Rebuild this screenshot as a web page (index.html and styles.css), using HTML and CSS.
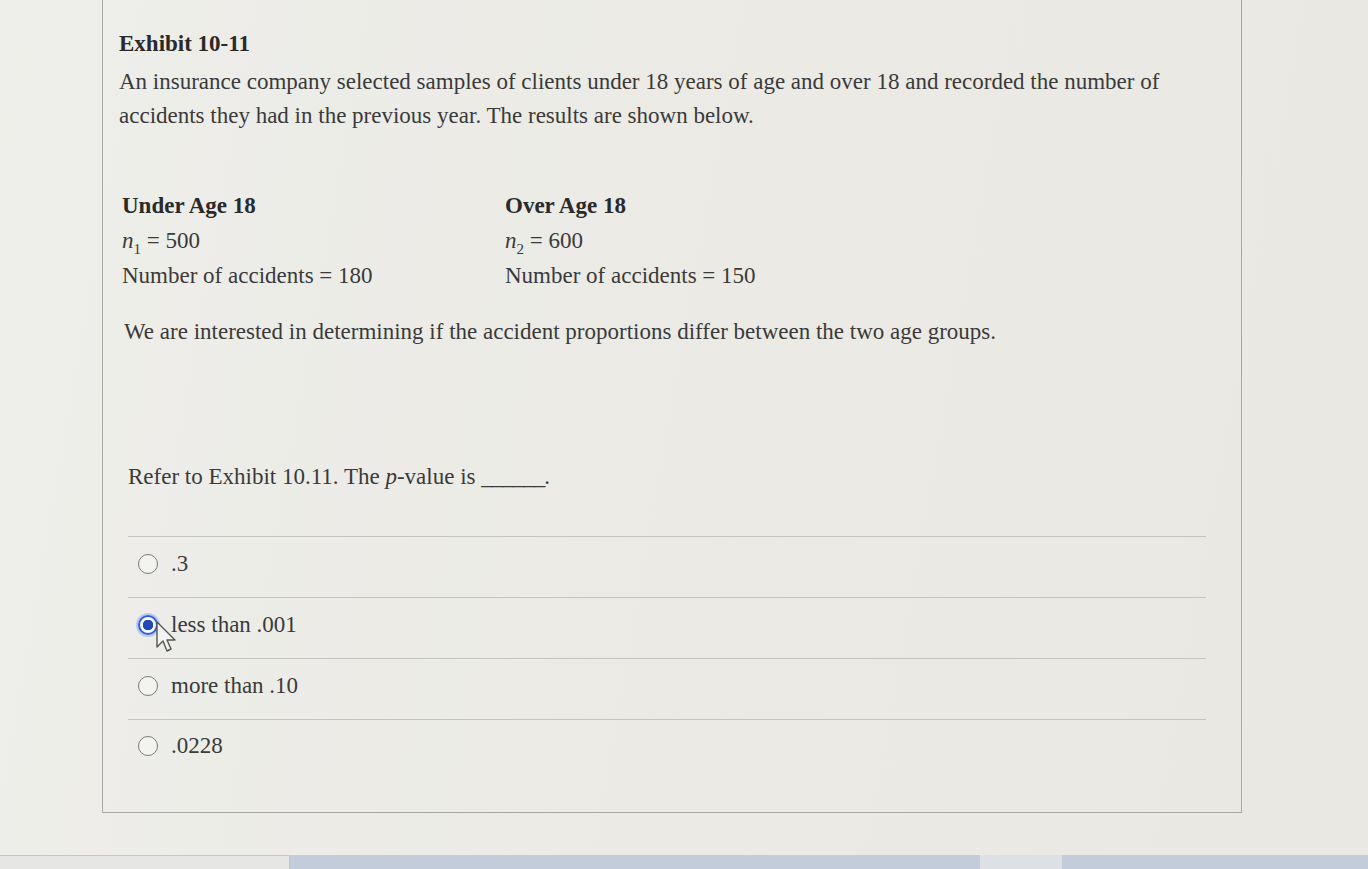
FILE: index.html
```html
<!DOCTYPE html>
<html>
<head>
<meta charset="utf-8">
<link rel="stylesheet" href="styles.css">
</head>
<body>
<div class="page">
  <div class="card">
    <div class="exhibit">
      <h1 class="title">Exhibit 10-11</h1>
      <p class="intro">An insurance company selected samples of clients under 18 years of age and over 18 and recorded the number of accidents they had in the previous year. The results are shown below.</p>
      <div class="groups">
        <div class="group">
          <div class="ghead">Under Age 18</div>
          <div class="gline"><i>n</i><sub>1</sub> = 500</div>
          <div class="gline">Number of accidents = 180</div>
        </div>
        <div class="group">
          <div class="ghead">Over Age 18</div>
          <div class="gline"><i>n</i><sub>2</sub> = 600</div>
          <div class="gline">Number of accidents = 150</div>
        </div>
      </div>
      <p class="interest">We are interested in determining if the accident proportions differ between the two age groups.</p>
    </div>
    <div class="question">
      <p class="prompt">Refer to Exhibit 10.11. The <i>p</i>-value is <span class="blank">______</span>.</p>
      <div class="options">
        <div class="option"><span class="radio"></span><span class="label">.3</span></div>
        <div class="option"><span class="radio checked"></span><span class="label">less than .001</span>
          <svg class="cursor" width="26" height="36" viewBox="0 0 26 36"><path d="M2 2 L2 27 L8 21 L12 31 L16 29 L12 20 L20 20 Z" fill="#f4f4f2" stroke="#555" stroke-width="1.4" stroke-linejoin="round"/></svg>
        </div>
        <div class="option"><span class="radio"></span><span class="label">more than .10</span></div>
        <div class="option"><span class="radio"></span><span class="label">.0228</span></div>
      </div>
    </div>
  </div>
  <div class="taskbar">
    <div class="seg seg-light"></div>
    <div class="seg seg-blue wide"></div>
    <div class="seg seg-pale"></div>
    <div class="seg seg-blue fill"></div>
  </div>
</div>
</body>
</html>
```

FILE: styles.css
```css
* { box-sizing: border-box; }
html, body {
  margin: 0;
  padding: 0;
  height: 869px;
  overflow: hidden;
}
body {
  background: linear-gradient(100deg, #eeeeea 0%, #ebeae5 50%, #e9e8e3 100%);
  font-family: "Liberation Serif", "Times New Roman", serif;
  color: #3a3a3a;
}
.page {
  height: 869px;
  display: flex;
  flex-direction: column;
}
.card {
  margin-left: 102px;
  width: 1140px;
  height: 813px;
  border: 1px solid #a8a8a4;
  border-top: none;
  padding: 32px 35px 0 16px;
}
.title {
  margin: 0;
  font-size: 23px;
  line-height: 24px;
  font-weight: bold;
  color: #2a2a2a;
}
.intro {
  margin: 9px 0 0 0;
  font-size: 23px;
  line-height: 34px;
}
.groups {
  display: flex;
  margin-top: 55px;
  padding-left: 3px;
}
.group {
  width: 383px;
  font-size: 23px;
  line-height: 35px;
}
.ghead {
  font-weight: bold;
  color: #2a2a2a;
}
.gline sub {
  font-size: 15px;
  line-height: 0;
}
.interest {
  margin: 21px 0 0 5px;
  font-size: 23px;
  line-height: 35px;
}
.question {
  margin-top: 110px;
  padding-left: 9px;
}
.prompt {
  margin: 0;
  font-size: 23px;
  line-height: 35px;
}
.blank {
  letter-spacing: -1px;
}
.options {
  margin-top: 42px;
}
.option {
  position: relative;
  display: flex;
  align-items: center;
  gap: 13px;
  border-top: 1px solid #c4c4c0;
  height: 61px;
  padding: 0 0 6px 10px;
  font-size: 23px;
}
.option:last-child {
  padding-bottom: 8px;
}
.radio {
  width: 20px;
  height: 20px;
  border-radius: 50%;
  border: 1.6px solid #7a7a78;
  background: #f3f3f0;
  flex: none;
}
.radio.checked {
  border: 2px solid #2c5fd4;
  background: radial-gradient(circle, #2548b8 0, #2548b8 5px, #f6f8ff 5.5px);
  box-shadow: 0 0 0 2px #b9c9f0;
}
.cursor {
  position: absolute;
  left: 27px;
  top: 22px;
}
.taskbar {
  margin-top: auto;
  height: 14px;
  display: flex;
}
.seg { height: 14px; }
.seg-light {
  width: 290px;
  background: #e6e6e4;
  border-top: 1px solid #c6c6c4;
  border-right: 1px solid #c6c6c4;
}
.seg-blue { background: #c2ccda; }
.wide { width: 690px; }
.seg-pale { width: 82px; background: #dde0e5; }
.fill { flex: 1; }
```
